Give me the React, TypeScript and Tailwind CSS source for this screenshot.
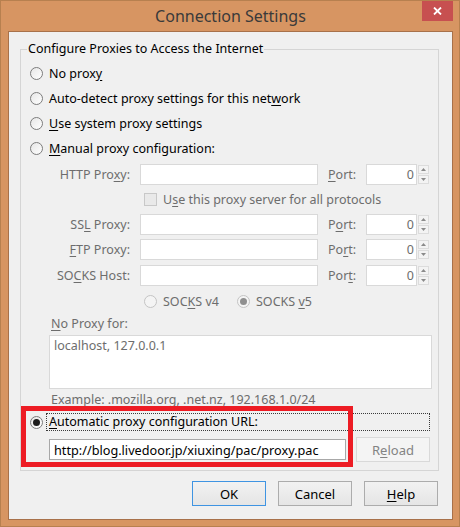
import React from "react";

const U = ({ children }: { children: React.ReactNode }) => (
  <span className="underline underline-offset-[2px] decoration-1">{children}</span>
);

function Radio({ checked = false, disabled = false }: { checked?: boolean; disabled?: boolean }) {
  return (
    <span
      className={`w-[13px] h-[13px] rounded-full border flex items-center justify-center shrink-0 ${
        disabled ? "border-[#c4c4c4] bg-[#f4f4f4]" : "border-[#7c7c7c] bg-linear-to-br from-[#e6e6e6] to-white"
      }`}
    >
      {checked && (
        <span className={`w-[7px] h-[7px] rounded-full ${disabled ? "bg-[#8f8f8f]" : "bg-[#1b1b1b]"}`} />
      )}
    </span>
  );
}

function Spinner() {
  return (
    <div className="ml-[1px] w-[11px] h-[21px] flex flex-col justify-center gap-[1px]">
      <div className="h-[9px] border border-[#dcdcdc] bg-[#f3f3f3] flex items-center justify-center">
        <svg width="5" height="3" viewBox="0 0 5 3">
          <path d="M2.5 0L5 3H0z" fill="#8a8a8a" />
        </svg>
      </div>
      <div className="h-[9px] border border-[#dcdcdc] bg-[#f3f3f3] flex items-center justify-center">
        <svg width="5" height="3" viewBox="0 0 5 3">
          <path d="M0 0H5L2.5 3z" fill="#8a8a8a" />
        </svg>
      </div>
    </div>
  );
}

function ProxyRow({ label, port }: { label: React.ReactNode; port: React.ReactNode }) {
  return (
    <div className="h-[21px] flex items-center">
      <div className="w-[109px] text-right text-[#6d6d6d] whitespace-nowrap">{label}</div>
      <div className="ml-[10px] w-[178px] h-[21px] border border-[#d9d9d9] bg-white" />
      <div className="ml-[10px] w-[38px] text-[#6d6d6d]">{port}</div>
      <div className="w-[51px] h-[21px] border border-[#d9d9d9] bg-white flex items-center justify-end pr-[2px] text-[#6d6d6d]">
        0
      </div>
      <Spinner />
    </div>
  );
}

export default function App() {
  return (
    <div
      className="relative w-[460px] h-[527px] bg-[#d79562] border border-[#b7804f] flex flex-col text-[12.5px] leading-[16px] text-black"
      style={{ fontFamily: '"Noto Sans", "Open Sans", sans-serif' }}
    >
      {/* title bar */}
      <div className="h-[30px] flex items-start pl-[7px] pr-[6px]">
        <div className="w-[31px]" />
        <div className="flex-1 h-[30px] flex items-center justify-center text-[16px] text-[#3a3a3a]">
          Connection Settings
        </div>
        <div className="w-[31px] h-[20px] bg-[#c75050] flex items-center justify-center">
          <svg width="9" height="8" viewBox="0 0 9 8">
            <path d="M1 0.5L8 7.5M8 0.5L1 7.5" stroke="white" strokeWidth="1.8" />
          </svg>
        </div>
      </div>

      {/* client area */}
      <div className="ml-[7px] mr-[6px] h-[489px] border border-[#a8714a] bg-[#f0f0f0] flex flex-col">
        <fieldset className="ml-[11px] mt-[9px] w-[419px] border border-[#d5d5d5] p-0 m-0">
          <legend className="ml-[6px] px-[1px] leading-[16px]">Configure Proxies to Access the Internet</legend>
          <div className="flex flex-col pt-[4px] pb-[8px]">
            <div className="h-[25px] flex items-center pl-[9px] gap-[6px]">
              <Radio />
              <span>
                No prox<U>y</U>
              </span>
            </div>
            <div className="h-[25px] flex items-center pl-[9px] gap-[6px]">
              <Radio />
              <span>
                Auto-detect proxy settings for this net<U>w</U>ork
              </span>
            </div>
            <div className="h-[25px] flex items-center pl-[9px] gap-[6px]">
              <Radio />
              <span>
                <U>U</U>se system proxy settings
              </span>
            </div>
            <div className="h-[25px] flex items-center pl-[9px] gap-[6px]">
              <Radio />
              <span>
                <U>M</U>anual proxy configuration:
              </span>
            </div>

            <div className="mt-[3px]">
              <ProxyRow
                label={
                  <>
                    HTTP Pro<U>x</U>y:
                  </>
                }
                port={
                  <>
                    <U>P</U>ort:
                  </>
                }
              />
            </div>
            <div className="h-[29px] flex items-center pl-[123px] gap-[6px] text-[#6d6d6d]">
              <span className="w-[13px] h-[13px] border border-[#c8c8c8] bg-[#e9e9e9] shrink-0" />
              <span>
                U<U>s</U>e this proxy server for all protocols
              </span>
            </div>
            <ProxyRow
              label={
                <>
                  SS<U>L</U> Proxy:
                </>
              }
              port={
                <>
                  P<U>o</U>rt:
                </>
              }
            />
            <div className="mt-[4px]">
              <ProxyRow
                label={
                  <>
                    <U>F</U>TP Proxy:
                  </>
                }
                port={
                  <>
                    Po<U>r</U>t:
                  </>
                }
              />
            </div>
            <div className="mt-[5px]">
              <ProxyRow
                label={
                  <>
                    SO<U>C</U>KS Host:
                  </>
                }
                port={
                  <>
                    Por<U>t</U>:
                  </>
                }
              />
            </div>
            <div className="h-[31px] flex items-center pl-[123px] text-[#6d6d6d]">
              <div className="w-[93px] flex items-center gap-[6px]">
                <Radio disabled />
                <span>
                  SOC<U>K</U>S v4
                </span>
              </div>
              <div className="flex items-center gap-[6px]">
                <Radio disabled checked />
                <span>
                  SOCKS <U>v</U>5
                </span>
              </div>
            </div>
            <div className="h-[14px] flex items-center pl-[30px] text-[#6d6d6d]">
              <span>
                <U>N</U>o Proxy for:
              </span>
            </div>
            <div className="mt-[4px] ml-[28px] w-[383px] h-[54px] border border-[#d9d9d9] bg-white pl-[4px] pt-[2px] text-[#6d6d6d]">
              localhost, 127.0.0.1
            </div>
            <div className="h-[22px] flex items-center pl-[30px] text-[#6d6d6d]">
              Example: .mozilla.org, .net.nz, 192.168.1.0/24
            </div>
            <div className="mt-[2px] h-[18px] flex items-center pl-[9px] gap-[3px]">
              <Radio checked />
              <div className="w-[384px] h-[18px] border border-dotted border-[#3a3a3a] flex items-center pl-[2px]">
                <span>
                  <U>A</U>utomatic proxy configuration URL:
                </span>
              </div>
            </div>
            <div className="mt-[6px] h-[25px] flex items-center">
              <div className="ml-[28px] w-[297px] h-[21px] border border-[#a8a8a8] bg-white flex items-center pl-[4px] text-[12.7px] whitespace-nowrap overflow-hidden">
                http://blog.livedoor.jp/xiuxing/pac/proxy.pac
              </div>
              <div className="ml-[10px] w-[74px] h-[25px] border border-[#d9d9d9] bg-[#f4f4f4] flex items-center justify-center text-[#838383] text-[13px]">
                <span>
                  R<U>e</U>load
                </span>
              </div>
            </div>
          </div>
        </fieldset>

        <div className="mt-[10px] flex justify-end pr-[14px] gap-[12px] text-[13px]">
          <div className="w-[74px] h-[25px] border border-[#3f94e2] bg-linear-to-b from-[#f2f2f2] to-[#e5e5e5] flex items-center justify-center">
            OK
          </div>
          <div className="w-[74px] h-[25px] border border-[#acacac] bg-linear-to-b from-[#f2f2f2] to-[#e5e5e5] flex items-center justify-center">
            Cancel
          </div>
          <div className="w-[74px] h-[25px] border border-[#acacac] bg-linear-to-b from-[#f2f2f2] to-[#e5e5e5] flex items-center justify-center">
            <span>
              <U>H</U>elp
            </span>
          </div>
        </div>
      </div>

      {/* red annotation */}
      <div className="absolute left-[20px] top-[405px] w-[332px] h-[61px] border-[5px] border-[#ed1c24] pointer-events-none" />
    </div>
  );
}
